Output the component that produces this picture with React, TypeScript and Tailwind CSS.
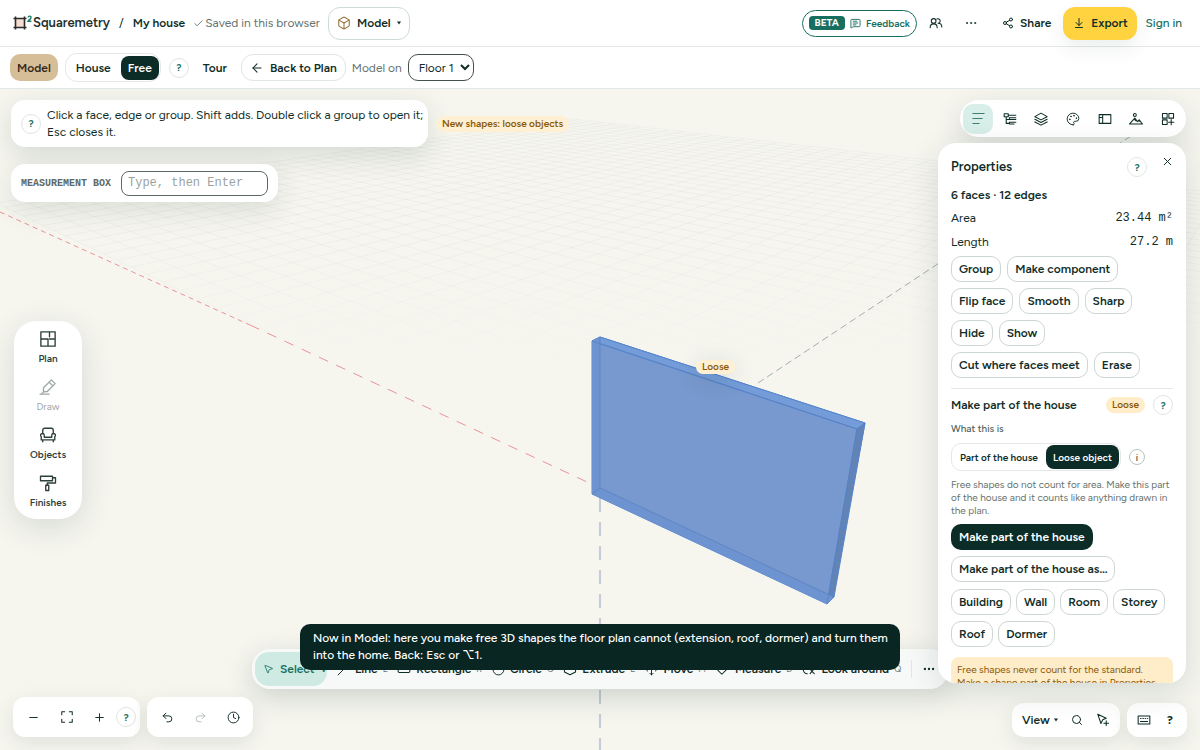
import React from 'react'
import {
  ArrowDownToLine,
  ArrowLeft,
  Box,
  Check,
  Circle,
  Clock,
  Ellipsis,
  MessageSquareText,
  Minus,
  MousePointer2,
  Move,
  Palette,
  Plus,
  Redo2,
  RectangleHorizontal,
  Search,
  Share2,
  Slash,
  Undo2,
  X,
} from 'lucide-react'

type IconProps = { children: React.ReactNode; size?: number }

const Icon = ({ children, size = 14 }: IconProps) => (
  <svg width={size} height={size} viewBox="0 0 24 24" fill="none" stroke="currentColor" strokeWidth="1.8" strokeLinejoin="round" strokeLinecap="round" aria-hidden="true">
    {children}
  </svg>
)

const UsersIcon = () => (
  <Icon>
    <circle cx="8" cy="8.5" r="4" />
    <path d="M2 20c0-4 2.500-6.500 6-6.500s6 2.500 6 6.500" />
    <path d="M13.500 5.200a3.800 3.800 0 1 1 2 7.100c3.800 0 6.500 2.500 6.500 6.700" />
  </Icon>
)

const ListIcon = () => (
  <Icon size={15}>
    <path d="M3 4h18M3 12h15M3 20h10" />
  </Icon>
)

const TreeIcon = () => (
  <Icon>
    <path d="M2 3h7v5H2zM5.500 8v11.500H11M5.500 13H11M9 5.500h13M11 10h11M11 13h11M11 17.500h11M11 20.500h8M11 10v3M11 17.500v3" />
  </Icon>
)

const StackIcon = () => (
  <Icon>
    <path d="M12 2 22.500 8 12 13.500 1.500 8z" />
    <path d="m1.500 12.500 10.500 5.500 10.500-5.500" />
    <path d="M1.500 17 12 22.500 22.500 17" />
  </Icon>
)

const SidebarIcon = () => (
  <Icon>
    <path d="M2 4.500h20v15H2zM8 4.500v15M2 9.500h6" />
  </Icon>
)

const LandscapeIcon = () => (
  <Icon>
    <circle cx="10" cy="5" r="2.500" />
    <path d="M1 20.500h22l-5.500-7-3 3L10 10.500zM10 10.500v3l2 1.500M17.500 13.500v2.500" />
  </Icon>
)

const GridPlusIcon = () => (
  <Icon>
    <path d="M2.500 2.500h8v8h-8zM13.500 2.500h8v8h-8zM2.500 13.500h8v8h-8zM17.500 13v9M13 17.500h9" />
  </Icon>
)

const PlanIcon = () => (
  <Icon size={18}>
    <path d="M2.500 2.500h19v19h-19zM2.500 12h9.500v9.500M14 2.500V9M12 15.500V12M14 12h7.500M16 12v0" />
  </Icon>
)

const DrawIcon = () => (
  <Icon size={18}>
    <path d="m6 13 10.500-10.500 5 5L11 18l-5 .5zM13.500 5.500l5 5M1.500 21.500h12M6 18.500l-2.500 3" />
  </Icon>
)

const ArmchairIcon = () => (
  <Icon size={18}>
    <path d="M5 10V5.500A2.500 2.500 0 0 1 7.500 3h9A2.500 2.500 0 0 1 19 5.500V10" />
    <path d="M7 15v-2.500A2.300 2.300 0 0 0 4.500 10 2.400 2.400 0 0 0 3 14.300V18.500h18v-4.200A2.400 2.400 0 0 0 19.500 10a2.300 2.300 0 0 0-2.500 2.500V15zM5 18.500V21M19 18.500V21" />
  </Icon>
)

const RollerIcon = () => (
  <Icon size={18}>
    <path d="M2 3h16v6H2zM18 5h4v7H11v3M9 15h4v7H9z" />
  </Icon>
)

const FitIcon = () => (
  <Icon>
    <path d="M8 3H3v5M16 3h5v5M3 16v5h5M21 16v5h-5" />
  </Icon>
)

const KeyboardIcon = () => (
  <Icon>
    <path d="M2 5h20v14H2zM6 9.500h1M10 9.500h1M14 9.500h1M18 9.500h.5M6 14.500h12" />
  </Icon>
)

const CursorPlusIcon = () => (
  <Icon>
    <path d="m3 2 5.500 16 3-6.500 6-2.500zM17.500 13.500v8M13.500 17.500h8" />
  </Icon>
)

const ExtrudeIcon = () => (
  <Icon>
    <path d="M12 3v9M8 6.500 12 3l4 3.500M6 8.500 2.500 11v6L12 22l9.500-5v-6L18 8.500" />
  </Icon>
)

const RulerIcon = () => (
  <Icon>
    <path d="m3 14 11-11 7 7-11 11z" />
  </Icon>
)

const OrbitIcon = () => (
  <Icon>
    <path d="M9 4c-4 0-7 3.500-7 8s3 8 7 8M14 12l3 4-3 4M21 12l-4 4 4 4" />
  </Icon>
)

const Caret = () => (
  <svg width="4" height="4" viewBox="0 0 4 4" fill="currentColor" aria-hidden="true">
    <path d="M0 .5h4L2 3.500z" />
  </svg>
)

const LogoMark = () => (
  <svg width="20" height="16" viewBox="0 0 20 16" fill="none" aria-hidden="true">
    <rect x="3" y="4" width="8" height="8" fill="#f6ddd0" />
    <path d="M2.500 1.500v13M11.500 1.500v13M.5 3.500h13M.5 12.500h13" stroke="#2b2b2b" strokeWidth="1.600" />
    <path d="M15 2.300c.3-1.700 3.300-1.500 3 .3C17.800 4 15.500 5 15 6.300h3.400" stroke="#17806a" strokeWidth="1.400" />
  </svg>
)

const Help = () => (
  <button aria-label="Help" className="flex h-5 w-5 shrink-0 items-center justify-center rounded-full border border-[#dfe5e3] bg-white text-[10px] font-bold text-[#17705f]">
    ?
  </button>
)

const Chip = ({ children }: { children: React.ReactNode }) => (
  <button className="flex h-[26px] items-center rounded-[10px] border border-[#cdd6d3] bg-white px-[7px] text-[12px] font-semibold text-[#0f2d28]">{children}</button>
)

const panelTabs = [
  { name: 'Outline', icon: <TreeIcon /> },
  { name: 'Layers', icon: <StackIcon /> },
  { name: 'Materials', icon: <Palette size={14} strokeWidth={1.6} /> },
  { name: 'Sections', icon: <SidebarIcon /> },
  { name: 'Scenery', icon: <LandscapeIcon /> },
  { name: 'Components', icon: <GridPlusIcon /> },
]

const tools = [
  { name: 'Line', hint: 'L', icon: <Slash size={13} strokeWidth={1.8} /> },
  { name: 'Rectangle', hint: 'R', icon: <RectangleHorizontal size={14} strokeWidth={1.8} /> },
  { name: 'Circle', hint: 'C', icon: <Circle size={13} strokeWidth={1.8} /> },
  { name: 'Extrude', hint: 'E', icon: <ExtrudeIcon /> },
  { name: 'Move', hint: 'M', icon: <Move size={13} strokeWidth={1.8} /> },
  { name: 'Measure', hint: 'D', icon: <RulerIcon /> },
  { name: 'Look around', hint: 'Q', icon: <OrbitIcon /> },
]

// ground plane: origin and the vanishing points of the two axes
const origin = [600, 488]
const redVanish = [-424, 5]
const greenVanish = [1332, 5]

const project = (u: number, v: number) => {
  const w = 1 + u + v
  const x = (origin[0] + u * redVanish[0] + v * greenVanish[0]) / w
  const y = (origin[1] + u * redVanish[1] + v * greenVanish[1]) / w
  return `${x.toFixed(1)} ${y.toFixed(1)}`
}

const steps = Array.from({ length: 41 }, (_, i) => i / 40)
const gridPath = steps
  .map((s) => `M${project(-0.55, s * 1.82)}L${project(1.44, s * 1.82)}M${project(s * 1.99 - 0.55, 0)}L${project(s * 1.99 - 0.55, 1.82)}`)
  .join('')

const Scene = () => (
  <svg className="absolute inset-0 h-full w-full" viewBox="0 89 1200 661" preserveAspectRatio="xMidYMid slice" aria-hidden="true">
    <defs>
      <linearGradient id="fade" x1="0" y1="110" x2="0" y2="370" gradientUnits="userSpaceOnUse">
        <stop offset="0" stopColor="#8f9c9a" stopOpacity="0.07" />
        <stop offset="0.5" stopColor="#8f9c9a" stopOpacity="0.08" />
        <stop offset="1" stopColor="#8f9c9a" stopOpacity="0" />
      </linearGradient>
    </defs>
    <path d={gridPath} stroke="url(#fade)" strokeWidth="1" fill="none" />
    <path d="M0 212 250 325" stroke="#eb9299" strokeWidth="1" strokeDasharray="5 4" />
    <path d="M250 325 600 488" stroke="#eb9299" strokeWidth="1" strokeDasharray="10 9" />
    <path d="M758 383 1140 130" stroke="#a2aeac" strokeWidth="1" strokeDasharray="7 4" />
    <path d="M600 498V750" stroke="#c5cbda" strokeWidth="2" strokeDasharray="14 10" />
    <g strokeLinejoin="round">
      <path d="M592 341 600 337 865 423 832 598 827 604 592 494z" fill="#7799cf" stroke="#5585ce" />
      <path d="M592 341 600 337 865 423 857 429z" fill="#749cd8" stroke="#5585ce" />
      <path d="M857 429 865 423 834 597 827 604z" fill="#6283b5" stroke="#5585ce" />
      <path d="M592 341 600 337V488L592 494zM592 494l8-6L834 597l-7 7z" fill="#6d94d0" />
      <path d="M600 337V488L834 597M592 494l8-6M857 429 827 604M592 341 857 429" fill="none" stroke="#5a81bf" strokeWidth="0.800" />
    </g>
  </svg>
)

const PropertiesPanel = () => (
  <aside className="absolute top-[54px] right-3.5 bottom-[67px] z-20 w-[248px] overflow-hidden rounded-[18px] bg-white px-[13px] pt-3 shadow-[0_8px_32px_rgba(15,45,40,0.14)]">
    <div className="flex h-6 items-center">
      <h2 className="flex-1 text-[13px] font-semibold">Properties</h2>
      <Help />
      <button aria-label="Close" className="-mr-1 mb-3 ml-2.5 flex h-5 w-5 items-center justify-center">
        <X size={13} strokeWidth={1.8} />
      </button>
    </div>
    <p className="mt-1.5 text-[12px] leading-5 font-semibold">6 faces · 12 edges</p>
    <dl className="mt-px text-[12px] leading-6">
      <div className="flex justify-between">
        <dt>Area</dt>
        <dd className="font-['Liberation_Mono',monospace]">23.44 m²</dd>
      </div>
      <div className="flex justify-between">
        <dt>Length</dt>
        <dd className="font-['Liberation_Mono',monospace]">27.2 m</dd>
      </div>
    </dl>
    <div className="mt-0.5 flex flex-wrap gap-x-1.5 gap-y-1.5 border-b border-[#e4e9e7] pb-2.5">
      <Chip>Group</Chip>
      <Chip>Make component</Chip>
      <Chip>Flip face</Chip>
      <Chip>Smooth</Chip>
      <Chip>Sharp</Chip>
      <div className="flex w-full gap-1.5">
        <Chip>Hide</Chip>
        <Chip>Show</Chip>
      </div>
      <Chip>Cut where faces meet</Chip>
      <Chip>Erase</Chip>
    </div>
    <div className="mt-1.5 flex h-5 items-center gap-2">
      <h3 className="flex-1 text-[12px] font-semibold">Make part of the house</h3>
      <span className="rounded-full bg-[#ffecc8] px-1.5 text-[10px] leading-4 font-semibold text-[#8a5a0a]">Loose</span>
      <Help />
    </div>
    <p className="mt-1.5 text-[10px] leading-4 font-medium text-[#50605c]">What this is</p>
    <div className="mt-1.5 flex items-center gap-2">
      <div className="flex h-7 items-center rounded-[10px] border border-[#e4e9e7] pr-px pl-2 text-[10px] font-semibold">
        <button className="pr-2">Part of the house</button>
        <button className="h-6 rounded-lg bg-[#0b2c27] px-[7px] text-white">Loose object</button>
      </div>
      <button aria-label="Info" className="flex h-4 w-4 items-center justify-center rounded-full border border-[#b9c4c1] text-[10px]">i</button>
    </div>
    <p className="mt-[7px] text-[10px] leading-[13px] text-[#66736f]">Free shapes do not count for area. Make this part of the house and it counts like anything drawn in the plan.</p>
    <div className="mt-[7px] flex flex-col items-start gap-1.5">
      <button className="h-[26px] rounded-[10px] bg-[#0b2c27] px-2 text-[12px] font-semibold text-white">Make part of the house</button>
      <Chip>Make part of the house as…</Chip>
    </div>
    <div className="mt-[7px] flex flex-wrap gap-x-[5px] gap-y-1.5">
      <Chip>Building</Chip>
      <Chip>Wall</Chip>
      <Chip>Room</Chip>
      <Chip>Storey</Chip>
      <Chip>Roof</Chip>
      <Chip>Dormer</Chip>
    </div>
    <p className="mt-2.5 rounded-lg bg-[#ffecc8] px-1.5 py-1.5 text-[10px] leading-[13px] text-[#8a5a0a]">Free shapes never count for the standard. Make a shape part of the house in Properties.</p>
  </aside>
)

const App = () => {
  return (
    <div className="flex h-screen flex-col overflow-hidden bg-white font-[Figtree,Inter,'Noto_Sans',sans-serif] text-[12px] text-[#0f2d28]">
      <header className="flex h-[47px] shrink-0 items-center border-b border-[#e2e8e6] pr-[18px] pl-[13px]">
        <LogoMark />
        <span className="text-[13px] font-semibold text-[#24302d]">Squaremetry</span>
        <span className="mx-[9px]">/</span>
        <span className="font-semibold">My house</span>
        <span className="ml-2 flex items-center gap-px text-[#66736f]">
          <Check size={11} strokeWidth={2} />
          Saved in this browser
        </span>
        <button className="ml-2 flex h-[33px] w-[82px] items-center justify-center gap-1.5 rounded-xl border border-[#cfdbd8] font-semibold">
          <Box size={14} strokeWidth={1.8} className="text-[#96703a]" />
          Model
          <Caret />
        </button>
        <div className="ml-auto flex items-center">
          <button className="flex h-[27px] items-center gap-[5px] rounded-full border border-[#17705f] px-1.5 text-[10px] font-semibold text-[#17705f]">
            <span className="rounded bg-[#17705f] px-1.5 leading-[14px] font-bold text-white">BETA</span>
            <MessageSquareText size={11} strokeWidth={2} />
            Feedback
          </button>
          <button aria-label="People" className="ml-3"><UsersIcon /></button>
          <button aria-label="More" className="ml-[21px]"><Ellipsis size={14} strokeWidth={1.5} /></button>
          <button className="ml-6 flex items-center gap-1.5 font-semibold">
            <Share2 size={12} strokeWidth={2} />
            Share
          </button>
          <button className="ml-3 flex h-[33px] w-[74px] items-center justify-center gap-1.5 rounded-xl bg-[#ffd340] font-semibold shadow-[0_8px_20px_rgba(15,45,40,0.08)]">
            <ArrowDownToLine size={12} strokeWidth={2} />
            Export
          </button>
          <a href="#signin" className="ml-2 font-medium text-[#17705f]">Sign in</a>
        </div>
      </header>

      <div className="flex h-[42px] shrink-0 items-center border-b border-[#e2e8e6] px-2.5">
        <button className="h-[27px] rounded-[10px] bg-[#d6be98] px-[7px] font-semibold text-[#33261a]">Model</button>
        <div className="ml-[7px] flex h-[29px] items-center rounded-xl border border-[#e2e8e6] pr-px pl-2.5 font-semibold">
          <button className="pr-2.5">House</button>
          <button className="h-6 rounded-lg bg-[#0b2c27] px-[7px] text-white">Free</button>
        </div>
        <div className="ml-2 flex"><Help /></div>
        <button className="ml-3.5 font-semibold">Tour</button>
        <button className="ml-3.5 flex h-[27px] items-center gap-1.5 rounded-xl border border-[#dfe6e4] px-2 font-semibold">
          <ArrowLeft size={14} strokeWidth={1.8} />
          Back to Plan
        </button>
        <label htmlFor="floor" className="mx-1.5 text-[#66736f]">Model on</label>
        <select id="floor" className="h-[27px] w-[66px] rounded-[10px] border border-[#43504d] bg-white pl-1.5">
          <option>Floor 1</option>
        </select>
      </div>

      <main className="relative flex-1 overflow-hidden bg-[#f6f6ef]">
        <Scene />
        <span className="absolute top-[41%] left-[58%] rounded-full bg-[#fff0d4] px-1.5 text-[10px] leading-[14px] font-semibold text-[#8a5a0a] shadow-[0_4px_24px_rgba(15,45,40,0.16)]">Loose</span>

        <div className="absolute top-[11px] left-[11px] flex flex-col items-start gap-[17px]">
          <div className="flex items-center gap-2">
            <div className="flex h-[47px] w-[417px] items-center gap-1.5 rounded-[14px] bg-white pr-0.5 pl-2.5 shadow-[0_8px_28px_rgba(15,45,40,0.14)]">
              <Help />
              <p className="text-[12px] leading-[17px]">Click a face, edge or group. Shift adds. Double click a group to open it; Esc closes it.</p>
            </div>
            <span className="rounded-full bg-[#fff0d4] px-1.5 text-[10px] leading-4 font-semibold text-[#8a5a0a]">New shapes: loose objects</span>
          </div>
          <div className="flex h-[38px] items-center gap-2.5 rounded-[14px] bg-white px-2.5 font-['Liberation_Mono',monospace] shadow-[0_8px_28px_rgba(15,45,40,0.12)]">
            <label htmlFor="measure" className="text-[10px] font-bold text-[#5c6966]">MEASUREMENT BOX</label>
            <input id="measure" placeholder="Type, then Enter" className="h-[25px] w-[147px] rounded-lg border border-[#5c6966] px-1.5 text-[12px] placeholder:text-[#9aa3a1]" />
          </div>
        </div>

        <nav className="absolute top-[232px] left-3.5 flex w-[68px] flex-col rounded-[22px] bg-white py-[3px] text-[10px] font-semibold text-[#2c3f3b] shadow-[0_8px_32px_rgba(15,45,40,0.14)]">
          <button className="flex h-12 flex-col items-center justify-center gap-[3px]"><PlanIcon />Plan</button>
          <button className="flex h-12 flex-col items-center justify-center gap-[3px] font-normal text-[#9fa8a5]"><DrawIcon />Draw</button>
          <button className="flex h-12 flex-col items-center justify-center gap-[3px]"><ArmchairIcon />Objects</button>
          <button className="flex h-12 flex-col items-center justify-center gap-[3px]"><RollerIcon />Finishes</button>
        </nav>

        <div className="absolute top-[11px] right-3.5 flex h-[37px] w-[226px] items-center justify-between rounded-full bg-white px-[3px] shadow-[0_8px_28px_rgba(15,45,40,0.14)]">
          <button aria-label="Properties" className="flex h-[30px] w-[30px] items-center justify-center rounded-[10px] bg-[#d8eee8] text-[#3f7d70]"><ListIcon /></button>
          {panelTabs.map((tab) => (
            <button key={tab.name} aria-label={tab.name} className="flex h-[30px] w-[30px] items-center justify-center">{tab.icon}</button>
          ))}
        </div>

        <PropertiesPanel />

        <div className="absolute bottom-[61px] left-1/2 flex h-10 w-[696px] -translate-x-1/2 items-center justify-between rounded-[18px] bg-[#f7f9f8] pr-3 pl-[3px] shadow-[0_8px_28px_rgba(15,45,40,0.18)]">
          <button className="flex h-[34px] w-[72px] items-center gap-1.5 rounded-[14px] bg-[#cfeae3] pl-2 font-semibold whitespace-nowrap text-[#17705f]">
            <MousePointer2 size={12} strokeWidth={1.8} />
            Select <span className="text-[9px]">V</span>
          </button>
          {tools.map((tool) => (
            <button key={tool.name} className="flex items-center gap-[5px] font-semibold whitespace-nowrap">
              {tool.icon}
              {tool.name}
              <span className="text-[9px] font-normal text-[#66736f]">{tool.hint}</span>
            </button>
          ))}
          <span className="h-[18px] w-px bg-[#e2e6e4]" />
          <button aria-label="More tools"><Ellipsis size={14} strokeWidth={2} /></button>
        </div>

        <div role="status" className="absolute bottom-20 left-1/2 z-10 h-[46px] w-[600px] -translate-x-1/2 rounded-[10px] bg-[#0a2622] py-1.5 pr-0 pl-[13px] text-[12px] leading-[17px] font-medium text-white">
          Now in Model: here you make free 3D shapes the floor plan cannot (extension, roof, dormer) and turn them into the home. Back: Esc or ⌥1.
        </div>

        <div className="absolute right-[13px] bottom-[13px] left-[13px] flex items-end gap-[7px]">
          <div className="flex h-10 w-[127px] items-center rounded-xl bg-white pl-1 shadow-[0_6px_20px_rgba(15,45,40,0.10)]">
            <button aria-label="Zoom out" className="flex w-[33px] justify-center"><Minus size={13} strokeWidth={1.8} /></button>
            <button aria-label="Fit" className="flex w-[33px] justify-center"><FitIcon /></button>
            <button aria-label="Zoom in" className="flex w-[33px] justify-center"><Plus size={13} strokeWidth={1.8} /></button>
            <Help />
          </div>
          <div className="flex h-10 w-[106px] items-center rounded-xl bg-white pl-1 shadow-[0_6px_20px_rgba(15,45,40,0.10)]">
            <button aria-label="Undo" className="flex w-[33px] justify-center"><Undo2 size={13} strokeWidth={1.8} /></button>
            <button aria-label="Redo" className="flex w-[33px] justify-center text-[#b4bcba]"><Redo2 size={13} strokeWidth={1.8} /></button>
            <button aria-label="History" className="flex w-[33px] justify-center"><Clock size={13} strokeWidth={1.8} /></button>
          </div>
          <div className="ml-auto flex h-[34px] w-[108px] items-center justify-between rounded-xl bg-white px-2.5 shadow-[0_6px_20px_rgba(15,45,40,0.10)]">
            <button className="flex items-center gap-1 font-semibold">View <Caret /></button>
            <button aria-label="Search"><Search size={12} strokeWidth={2} /></button>
            <button aria-label="Add selection"><CursorPlusIcon /></button>
          </div>
          <div className="flex h-[34px] w-[60px] items-center justify-between rounded-xl bg-white pr-3.5 pl-2.5 shadow-[0_6px_20px_rgba(15,45,40,0.10)]">
            <button aria-label="Keyboard shortcuts"><KeyboardIcon /></button>
            <button aria-label="Help" className="font-bold">?</button>
          </div>
        </div>
      </main>
    </div>
  )
}

export default App
